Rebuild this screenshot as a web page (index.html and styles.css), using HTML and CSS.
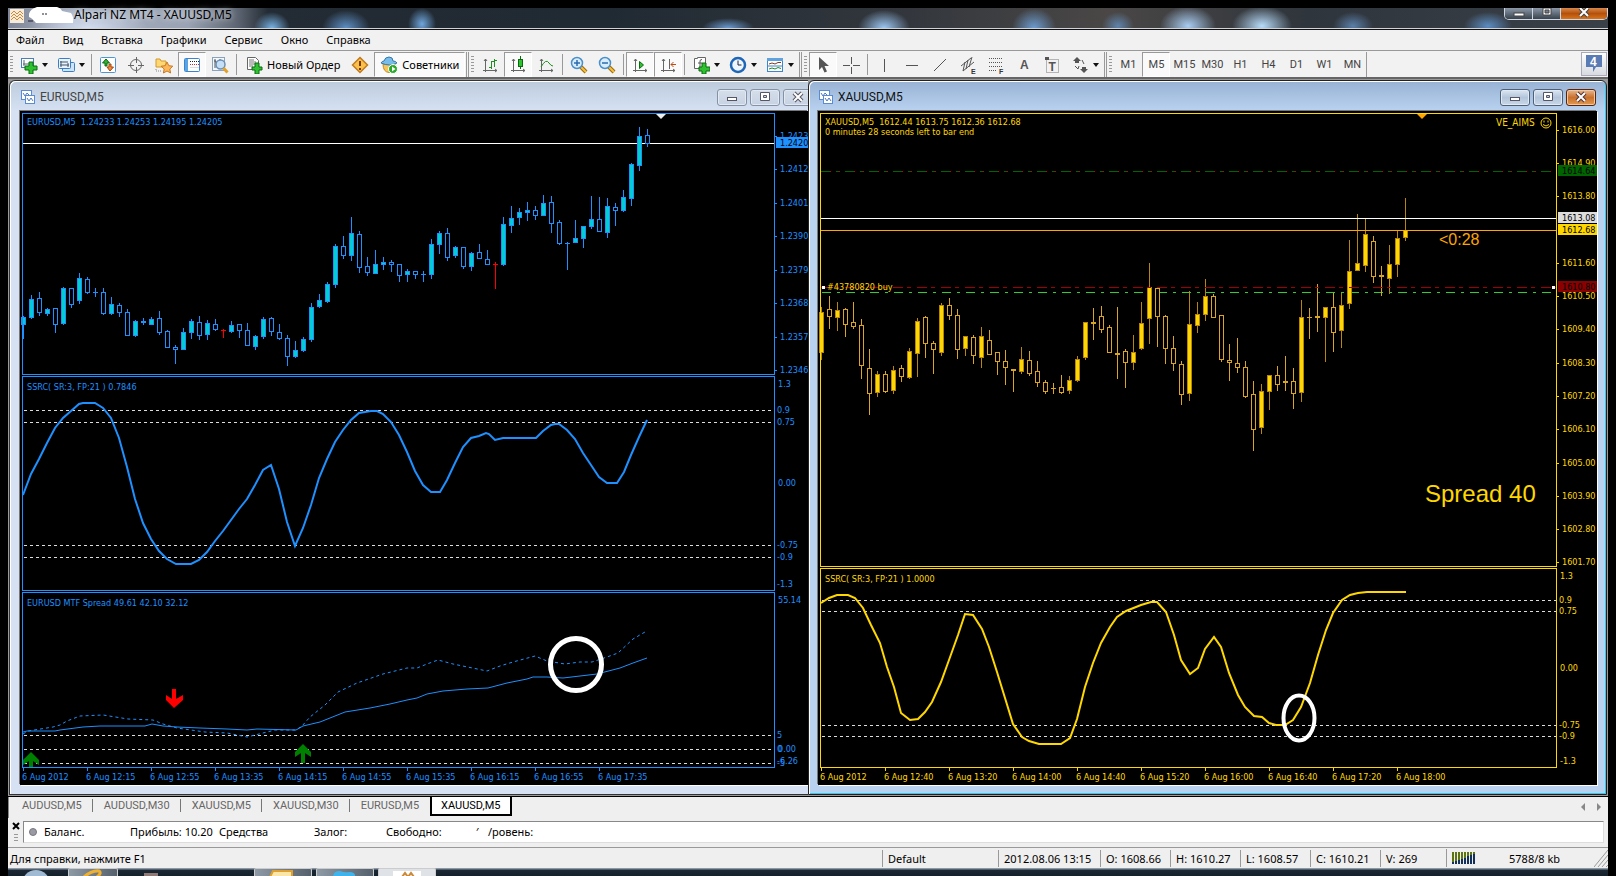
FILE: index.html
```html
<!DOCTYPE html>
<html lang="ru">
<head>
<meta charset="utf-8">
<title>Alpari NZ MT4 - XAUUSD,M5</title>
<link rel="stylesheet" href="styles.css">
</head>
<body>
<div class="app">
  <header class="titlebar">
    <svg class="app-icon" viewBox="0 0 14 14"><rect width="14" height="14" fill="#f6ead8"/><path d="M1 5l3-3 3 3 3-3 3 3M1 8l3-3 3 3 3-3 3 3M1 11l3-3 3 3 3-3 3 3" fill="none" stroke="#c98a3c"/></svg>
    <svg class="blot" viewBox="0 0 46 18"><path d="M1 8Q2 3 9 1h20q4 1 5 4l9 2q3 4 2 10H8Q4 12 1 11z" fill="#fff"/><path d="M0 15h5M14 8h2M17 8h2" stroke="#223" /></svg>
    <h1 class="app-title">Alpari NZ MT4 - XAUUSD,M5</h1>
    <div class="caption">
      <button class="cap" aria-label="Свернуть"><svg viewBox="0 0 14 12"><rect x="2" y="5" width="10" height="3" fill="#fff" stroke="#444"/></svg></button>
      <button class="cap" aria-label="Развернуть"><svg viewBox="0 0 14 12"><path d="M3 0h8v7H3zM5 2v3h4V2z" fill="#fff" fill-rule="evenodd" stroke="#444"/></svg></button>
      <button class="cap cap-close" aria-label="Закрыть"><svg viewBox="0 0 14 12"><path d="M3 0l8 8M11 0L3 8" stroke="#444" stroke-width="4"/><path d="M3 0l8 8M11 0L3 8" stroke="#fff" stroke-width="2"/></svg></button>
    </div>
  </header>
  <nav class="menu">
    <button>Файл</button><button>Вид</button><button>Вставка</button><button>Графики</button><button>Сервис</button><button>Окно</button><button>Справка</button>
  </nav>
  <div class="toolbar">
    <i class="grip"></i>
    <button class="tb split" aria-label="Новый график"><svg viewBox="0 0 18 18"><rect x="1.500" y="2.500" width="12" height="9" fill="#fff" stroke="#4a7fb5"/><path d="M4 4v6M3 8h9" stroke="#567"/><path d="M9 6h4v4h4v4h-4v4H9v-4H5v-4h4z" fill="#2fc12f" stroke="#0a6a12"/></svg><b class="caret"></b></button>
    <button class="tb split" aria-label="Профили"><svg viewBox="0 0 18 18"><rect x="5.500" y="6.500" width="12" height="9" rx="1" fill="#cfe4f8" stroke="#3a7fc4"/><rect x="1.500" y="2.500" width="12" height="10" rx="1" fill="#e8f3fd" stroke="#3a7fc4"/><path d="M4 5v6M3 6h8M3 9h9M11 7v4" stroke="#456"/></svg><b class="caret"></b></button>
    <i class="sep"></i>
    <button class="tb" aria-label="Обзор рынка"><svg viewBox="0 0 18 18"><rect x="1.500" y="1.500" width="15" height="15" rx="1" fill="#fff" stroke="#4f97d2"/><path d="M7 3L3.500 7H6v3h2V7h2.500z" fill="#2db52d" stroke="#0a6a12"/><path d="M11 15l-3-4h2V8h2v3h2.500z" fill="#f08a3a" stroke="#a3460c"/></svg></button>
    <button class="tb" aria-label="Окно данных"><svg viewBox="0 0 18 18"><circle cx="9" cy="9" r="5.500" fill="none" stroke="#666"/><path d="M9.500 1v6M9.500 11v6M1 9.500h6M11 9.500h6" stroke="#666"/></svg></button>
    <button class="tb" aria-label="Навигатор"><svg viewBox="0 0 18 18"><path d="M1 3h4l1 2h5v6H1z" fill="#ffd873" stroke="#d09a2c"/><path d="M1 13v2h5" stroke="#888" fill="none" stroke-dasharray="1 1"/><path d="M12 6l1.800 3.700 4 .5-3 2.800.8 4-3.600-2-3.600 2 .8-4-3-2.800 4-.5z" fill="#fdb75a" stroke="#c77a21"/></svg></button>
    <button class="tb on" aria-label="Терминал"><svg viewBox="0 0 18 18"><rect x="1.500" y="2.500" width="15" height="13" rx="1" fill="#fff" stroke="#3a84cf"/><path d="M2 3h3v12H2z" fill="#5ba4e4"/><path d="M7 5.500h9" stroke="#222" stroke-dasharray="1 1"/><path d="M7 8.500h9" stroke="#d22" stroke-dasharray="1 1"/><path d="M7 11.500h9" stroke="#ddd"/></svg></button>
    <button class="tb" aria-label="Тестер стратегий"><svg viewBox="0 0 18 18"><rect x="1.500" y="1.500" width="12" height="13" fill="#f4f8fc" stroke="#8ba2ba"/><path d="M3 5h2v2M4 3v9M9 3v3" stroke="#555" fill="none"/><circle cx="9.500" cy="8.500" r="4.500" fill="#c5e0f6" stroke="#6a8eb4" stroke-width="1.500"/><path d="M12.500 12l4 4.500" stroke="#e2a12a" stroke-width="3"/></svg></button>
    <i class="sep"></i>
    <button class="tb wide"><svg viewBox="0 0 18 18"><path d="M2.500 1.500h8l3 3v9h-11z" fill="#fff" stroke="#666"/><path d="M4 4h5M4 6h7M4 8h7M4 10h4" stroke="#777"/><path d="M10 7h4v4h3v3h-3v4h-4v-4H7v-3h3z" fill="#2fc12f" stroke="#0a6a12"/></svg><span>Новый Ордер</span></button>
    <button class="tb" aria-label="MetaEditor"><svg viewBox="0 0 18 18"><path d="M9 1.500L16.500 9 9 16.500 1.500 9z" fill="#f9c04e" stroke="#c07a1c" stroke-width="1.500"/><path d="M9 5v5M9 12v2" stroke="#7a3b00" stroke-width="2"/></svg></button>
    <button class="tb wide on"><svg viewBox="0 0 18 18"><path d="M3 8q0 8 6 8.500 6-1 6-8.500z" fill="#f7c55a" stroke="#c08a25"/><path d="M1 7q1-2 3-2 1-4 5-4t4 4q3 0 4 2-7 4-16 0z" fill="#78bdea" stroke="#3577aa"/><circle cx="13" cy="13" r="4.500" fill="#2aa92a" stroke="#fff"/><path d="M12 10.500v5l3.500-2.500z" fill="#fff"/></svg><span>Советники</span></button>
    <i class="edge"></i><i class="grip"></i>
    <button class="tb" aria-label="Бары"><svg viewBox="0 0 18 18"><path d="M4.500 3v13M2 14.500h14M3 5l1.500-2L6 5M14 13l2 1.500-2 1.500" stroke="#666" fill="none"/><path d="M10.500 5v8M8 11.500h2.500M13.500 3v8M11 5.500h2.500M13.500 4.500H16" stroke="#1f8f1f"/></svg></button>
    <button class="tb on" aria-label="Свечи"><svg viewBox="0 0 18 18"><path d="M4.500 3v13M2 14.500h14M3 5l1.500-2L6 5M14 13l2 1.500-2 1.500" stroke="#666" fill="none"/><path d="M11.500 0v13" stroke="#0a6a12"/><rect x="9.500" y="3.500" width="4" height="7" fill="#2fc12f" stroke="#0a6a12"/></svg></button>
    <button class="tb" aria-label="Линия"><svg viewBox="0 0 18 18"><path d="M4.500 3v13M2 14.500h14M3 5l1.500-2L6 5M14 13l2 1.500-2 1.500" stroke="#666" fill="none"/><path d="M4 11q5-9 8-4 2 3 4 3" stroke="#1f8f1f" fill="none"/></svg></button>
    <i class="sep"></i>
    <button class="tb" aria-label="Увеличить"><svg viewBox="0 0 18 18"><path d="M11 11l5 5" stroke="#9a6a10" stroke-width="4"/><path d="M11 11l5 5" stroke="#f5c040" stroke-width="2"/><circle cx="7" cy="7" r="5.500" fill="#d8ecfb" stroke="#4a90c8" stroke-width="1.500"/><path d="M7 4v6M4 7h6" stroke="#2a6cb0" stroke-width="1.500"/></svg></button>
    <button class="tb" aria-label="Уменьшить"><svg viewBox="0 0 18 18"><path d="M11 11l5 5" stroke="#9a6a10" stroke-width="4"/><path d="M11 11l5 5" stroke="#f5c040" stroke-width="2"/><circle cx="7" cy="7" r="5.500" fill="#d8ecfb" stroke="#4a90c8" stroke-width="1.500"/><path d="M4 7h6" stroke="#2a6cb0" stroke-width="1.500"/></svg></button>
    <i class="sep"></i>
    <button class="tb on" aria-label="Автопрокрутка"><svg viewBox="0 0 18 18"><path d="M4.500 3v13M2 14.500h14M3 5l1.500-2L6 5M14 13l2 1.500-2 1.500" stroke="#666" fill="none"/><path d="M8.500 5.500v7l4-3.500z" fill="#2fc12f" stroke="#0a6a12"/></svg></button>
    <button class="tb on" aria-label="Сдвиг графика"><svg viewBox="0 0 18 18"><path d="M4.500 3v13M2 14.500h14M3 5l1.500-2L6 5M14 13l2 1.500-2 1.500M10.500 3v10" stroke="#666" fill="none"/><path d="M12 8.500h5M14.500 6L12 8.500l2.500 2.500" stroke="#c04a10" fill="none"/></svg></button>
    <i class="sep"></i>
    <button class="tb split" aria-label="Индикаторы"><svg viewBox="0 0 18 18"><path d="M2.500 2.500h3v-1h8v11h-11z" fill="#fff" stroke="#666"/><path d="M8 11V5q0-1.500 2-1.500M6 7h4" stroke="#555" fill="none"/><path d="M10 7h4v4h4v4h-4v3h-4v-3H7v-4h3z" fill="#2fc12f" stroke="#0a6a12"/></svg><b class="caret"></b></button>
    <button class="tb split" aria-label="Периоды"><svg viewBox="0 0 18 18"><circle cx="9" cy="9" r="7" fill="#eef7ff" stroke="#1d66b8" stroke-width="2.500"/><path d="M9 4.500V9h3.500" stroke="#223" fill="none"/></svg><b class="caret"></b></button>
    <button class="tb split" aria-label="Шаблоны"><svg viewBox="0 0 18 18"><rect x="1.500" y="2.500" width="15" height="13" fill="#fff" stroke="#3d86cc"/><path d="M1 2h16v3H1z" fill="#5ea2df"/><path d="M3 8l3-1 3 1 3-1.500h3" stroke="#8a3a1a" fill="none"/><path d="M2 10h14" stroke="#3d86cc"/><path d="M3 13l3-1 3 1 3-1.500 3 1" stroke="#1f8f1f" fill="none"/></svg><b class="caret"></b></button>
    <i class="edge"></i><i class="grip"></i>
    <button class="tb on" aria-label="Курсор"><svg viewBox="0 0 18 18"><path d="M5 1v13l3-3 2.500 5.500 2.500-1L10.500 10H15z" fill="#555"/></svg></button>
    <button class="tb" aria-label="Перекрестие"><svg viewBox="0 0 18 18"><path d="M9.500 1v7M9.500 11v7M1 9.500h7M11 9.500h7" stroke="#555"/></svg></button>
    <i class="sep"></i>
    <button class="tb" aria-label="Вертикальная линия"><svg viewBox="0 0 18 18"><path d="M9.500 3v13" stroke="#555"/></svg></button>
    <button class="tb" aria-label="Горизонтальная линия"><svg viewBox="0 0 18 18"><path d="M3 9.500h12" stroke="#555"/></svg></button>
    <button class="tb" aria-label="Трендовая линия"><svg viewBox="0 0 18 18"><path d="M3 15L15 3" stroke="#555"/></svg></button>
    <button class="tb" aria-label="Канал"><svg viewBox="0 0 18 18"><path d="M2 10l10-8M4 15L15 6M4 15L6 6M7 13l2-9M10 11l3-10" stroke="#555"/><text x="12" y="18" class="mark">E</text></svg></button>
    <button class="tb" aria-label="Фибоначчи"><svg viewBox="0 0 18 18"><path d="M2 2.500h14M2 6.500h14M2 10.500h14M2 14.500h8" stroke="#555" stroke-dasharray="1 1"/><text x="12" y="18" class="mark">F</text></svg></button>
    <button class="tb letter" aria-label="Текст">A</button>
    <button class="tb" aria-label="Метка"><svg viewBox="0 0 18 18"><rect x="3.500" y="3.500" width="12" height="13" fill="none" stroke="#777" stroke-dasharray="1 1"/><path d="M2 1h4v3H2z" fill="#555"/><text x="5.500" y="15" class="mark-t">T</text></svg></button>
    <button class="tb split" aria-label="Стрелки"><svg viewBox="0 0 18 18"><path d="M6 1l4 4H8v2H4V5H2zM13 17l-4-4h2v-2h4v2h2z" fill="#555"/><path d="M4 10l3 3 1-3M11 4l2 4" fill="none" stroke="#555"/></svg><b class="caret"></b></button>
    <i class="edge"></i><i class="grip"></i>
    <div class="periods">
      <button>M1</button><button class="on">M5</button><button>M15</button><button>M30</button><button>H1</button><button>H4</button><button>D1</button><button>W1</button><button>MN</button>
    </div>
    <i class="edge thin"></i>
    <button class="alerts" aria-label="Сообщения"><svg viewBox="0 0 18 20"><path d="M1 1h16v12h-6l-3 5v-5H1z" fill="#5b7bb4"/><text x="5" y="12">4</text></svg></button>
  </div>

  <main class="mdi">
    <section class="win">
      <div class="win-title">
        <svg class="win-icon" viewBox="0 0 14 14"><rect x=".5" y=".5" width="10" height="9" fill="#fff" stroke="#5b8bd0"/><path d="M2 3l2 3 2-3 2 2" stroke="#4a7ac8" fill="none"/><rect x="4.500" y="5.500" width="9" height="8" fill="#fff" stroke="#5b8bd0"/><path d="M6 8l2 3 2-3 2 3" stroke="#4a7ac8" fill="none"/></svg>
        <h2>EURUSD,M5</h2>
        <div class="win-btns">
          <button aria-label="Свернуть"><svg viewBox="0 0 14 12"><rect x="2.500" y="6.500" width="9" height="3" fill="#fff" stroke="#556"/></svg></button>
          <button aria-label="Развернуть"><svg viewBox="0 0 14 12"><path d="M2.500 1.500h9v8h-9zM5.500 4.500v2h3v-2z" fill="#fff" fill-rule="evenodd" stroke="#556"/></svg></button>
          <button aria-label="Закрыть"><svg viewBox="0 0 14 12"><path d="M3 2l8 8M11 2l-8 8" stroke="#556" stroke-width="4"/><path d="M3 2l8 8M11 2l-8 8" stroke="#fff" stroke-width="2"/></svg></button>
        </div>
      </div>
      <svg class="chart eur" id="eurusd" viewBox="20 111 788 674" preserveAspectRatio="xMinYMin meet"></svg>
    </section>
    <section class="win active">
      <div class="win-title">
        <svg class="win-icon" viewBox="0 0 14 14"><rect x=".5" y=".5" width="10" height="9" fill="#fff" stroke="#5b8bd0"/><path d="M2 3l2 3 2-3 2 2" stroke="#4a7ac8" fill="none"/><rect x="4.500" y="5.500" width="9" height="8" fill="#fff" stroke="#5b8bd0"/><path d="M6 8l2 3 2-3 2 3" stroke="#4a7ac8" fill="none"/></svg>
        <h2>XAUUSD,M5</h2>
        <div class="win-btns">
          <button aria-label="Свернуть"><svg viewBox="0 0 14 12"><rect x="2.500" y="6.500" width="9" height="3" fill="#fff" stroke="#556"/></svg></button>
          <button aria-label="Развернуть"><svg viewBox="0 0 14 12"><path d="M2.500 1.500h9v8h-9zM5.500 4.500v2h3v-2z" fill="#fff" fill-rule="evenodd" stroke="#556"/></svg></button>
          <button class="x" aria-label="Закрыть"><svg viewBox="0 0 14 12"><path d="M3 2l8 8M11 2l-8 8" stroke="#533" stroke-width="4"/><path d="M3 2l8 8M11 2l-8 8" stroke="#fff" stroke-width="2"/></svg></button>
        </div>
      </div>
      <svg class="chart xau" id="xauusd" viewBox="818 111 779 674" preserveAspectRatio="xMinYMin meet"></svg>
    </section>
  </main>

  <div class="tabs">
    <button>AUDUSD,M5</button><button>AUDUSD,M30</button><button>XAUUSD,M5</button><button>XAUUSD,M30</button><button>EURUSD,M5</button><button class="current">XAUUSD,M5</button>
    <div class="scroll"><button class="left" aria-label="Назад"></button><button class="right" aria-label="Вперёд"></button></div>
  </div>
  <div class="terminal">
    <div class="dock"><button aria-label="Закрыть панель"><svg viewBox="0 0 8 8"><path d="M1 1l6 6M7 1L1 7" stroke="#000" stroke-width="2"/></svg></button><i></i></div>
    <div class="account">
      <span class="dot"></span>
      <span class="c1">Баланс.</span><span class="c2">Прибыль: 10.20</span><span class="c3">Средства</span><span class="c4">Залог:</span><span class="c5">Свободно:</span><span class="c6">′</span><span>/ровень:</span>
    </div>
  </div>
  <footer class="status">
    <span class="help">Для справки, нажмите F1</span>
    <span class="s-def">Default</span><span class="s-date">2012.08.06 13:15</span><span class="s-p">O: 1608.66</span><span class="s-p">H: 1610.27</span><span class="s-p">L: 1608.57</span><span class="s-p">C: 1610.21</span><span class="s-v">V: 269</span>
    <span class="s-net"><svg viewBox="0 0 24 12"><path d="M1 0v12M4 0v12M7 0v12M10 0v12M13 0v12M16 0v12M19 0v12M22 0v12" stroke="#5d7410" stroke-width="2"/><path d="M1 10v2M4 9v3M7 8v4M10 7v5M13 6v6M16 4v8M19 3v9M22 2v10" stroke="#12305c" stroke-width="2"/></svg><b>5788/8 kb</b><svg class="sizer" viewBox="0 0 14 18"><path d="M0 18L14 1M4 18L14 6M8 18l6-7M12 18l2-2" stroke="#999"/></svg></span>
  </footer>
  <div class="taskbar">
    <i class="orb"></i>
    <button aria-label="Internet Explorer"><svg viewBox="0 0 30 8"><path d="M6 8Q14 1 21 2q3 2-2 6" fill="none" stroke="#f0b030" stroke-width="3"/></svg></button>
    <i class="item"></i>
    <button aria-label="Проводник"><svg viewBox="0 0 30 8"><path d="M2 8l3-6h19v6z" fill="#f9e6a8" stroke="#e0a030" stroke-width="2"/></svg></button>
    <button aria-label="Skype"><svg viewBox="0 0 30 8"><path d="M3 8q0-6 7-6 5 2 9 1 7 0 6 5z" fill="#3fb4ec"/></svg></button>
    <button class="lit" aria-label="MetaTrader"><svg viewBox="0 0 30 8"><rect x="1" y="2" width="28" height="6" fill="#fff"/><path d="M10 8l3-4 3 4 3-4 3 4" fill="none" stroke="#c98a3c" stroke-width="2"/></svg></button>
  </div>
</div>
<script src="charts.js"></script>
</body>
</html>
```
FILE: styles.css
```css
* { box-sizing: border-box; }
body { margin: 0; background: #000; font: 12px/16px "Noto Sans", "Open Sans", sans-serif; color: #000; }
button { font: inherit; color: inherit; background: none; border: 0; padding: 0; margin: 0; }
h1, h2 { margin: 0; font-weight: 400; }
.app { min-height: 100vh; padding: 8px 8px 0; display: flex; flex-direction: column; }

.titlebar { height: 21px; display: flex; align-items: center; padding-left: 2px;
  background:
    radial-gradient(ellipse 18px 16px at 264px 20px, #79b4e6, transparent),
    radial-gradient(ellipse 24px 18px at 338px 20px, #5d8fc4, transparent),
    radial-gradient(ellipse 14px 16px at 414px 16px, #6fa6dc, transparent),
    radial-gradient(ellipse 26px 10px at 720px 20px, #6a9ad0, transparent),
    radial-gradient(ellipse 26px 18px at 876px 20px, #9cc8f4, transparent),
    radial-gradient(ellipse 22px 20px at 1026px 20px, #6c9cd0, transparent),
    radial-gradient(ellipse 16px 14px at 1110px 18px, #5f83aa, transparent),
    radial-gradient(ellipse 28px 20px at 1180px 18px, #a9cdf2, transparent),
    radial-gradient(ellipse 30px 20px at 1254px 18px, #b7dcfa, transparent),
    radial-gradient(ellipse 20px 14px at 1345px 18px, #5a7ea8, transparent),
    radial-gradient(ellipse 24px 14px at 1480px 18px, #5b8cc0, transparent),
    radial-gradient(ellipse 60px 20px at 80px 20px, #d2ddf0, transparent),
    linear-gradient(90deg, #7e8596 0, #a4aebf 60px, #9aa3b3 180px, #5b6470 230px, #232b34 260px, #202a33 600px, #33373d 900px, #4a4746 1100px, #2f353c 1300px, #3a4048 100%);
  border-bottom: 1px solid #cfd3d8; }
.app-icon { width: 14px; height: 14px; margin-top: -4px; }
.blot { width: 46px; height: 18px; margin: -6px 0 0 4px; }
.app-title { font-size: 12px; line-height: 16px; margin-top: -6px; text-shadow: 0 0 6px #fff; }
.caption { margin-left: auto; align-self: flex-start; display: flex; height: 12px; border: 1px solid #cfd8e2; border-top: 0; border-radius: 0 0 5px 5px; overflow: hidden; }
.cap { width: 28px; border-right: 1px solid #cfd8e2; background: linear-gradient(#8b98a8, #39424e); display: flex; justify-content: center; }
.cap svg { width: 14px; height: 12px; }
.cap-close { width: 46px; border: 0; background: linear-gradient(#d9894a, #b4500c 50%, #d8731a); }

.menu { height: 22px; background: #f2f1f1; border-top: 1px solid #111; border-bottom: 1px solid #999; display: flex; align-items: center; padding-left: 8px; gap: 18px; font-size: 11px; }
.toolbar { height: 28px; background: #f3f2f2; border-bottom: 2px solid #666; display: flex; align-items: stretch; padding-top: 1px; white-space: nowrap; }
.grip { width: 3px; margin: 4px 2px; flex: none; background: repeating-linear-gradient(#999 0 1px, transparent 1px 3px); }
.sep { width: 1px; margin: 2px; background: #999; flex: none; }
.edge { width: 3px; border: solid #999; border-width: 0 1px; margin-left: 1px; flex: none; }
.edge.thin { width: 1px; border-width: 0 0 0 1px; margin-left: 0; }
.tb { width: 28px; display: flex; align-items: center; justify-content: center; flex: none; border: 1px solid transparent; border-radius: 0; }
.tb svg { width: 18px; height: 18px; flex: none; }
.tb.split { width: 37px; gap: 4px; }
.tb.wide { width: auto; padding: 0 5px; gap: 4px; font-size: 11px; }
.tb.on, .periods .on { border-color: #999 #fff #fff #999; background: #fafafa; }
.caret { border: 3px solid transparent; border-top: 4px solid #111; border-bottom: 0; }
.letter { font: bold 12px "Liberation Sans", sans-serif; color: #555; }
.mark { font: bold 7px "Liberation Sans", sans-serif; fill: #333; }
.mark-t { font: bold 12px "Liberation Sans", sans-serif; fill: #555; }
.periods { display: flex; font: 11px Roboto, sans-serif; color: #444; }
.periods button { width: 28px; border: 1px solid transparent; }
.alerts { margin: 0 1px 1px auto; width: 26px; border: 1px solid #aab; background: linear-gradient(#fff, #d8dbe0); display: flex; justify-content: center; align-items: center; }
.alerts svg { width: 18px; height: 20px; }
.alerts text { font: bold 12px "Liberation Sans", sans-serif; fill: #fff; }

.mdi { flex: 1; min-height: 0; display: grid; grid-template-columns: 1fr 1fr; padding: 1px; background: #9a9a9a; }
.win { min-width: 0; min-height: 0; overflow: hidden; display: flex; flex-direction: column; border: 1px solid #333; border-right: 0; border-radius: 6px 0 0 0; padding: 0 0 9px 10px; background: #d5dff0; box-shadow: inset 1px 1px 0 #fff; background-image: linear-gradient(#bccbdb, #d6e2f4 30px); }
.win.active { border: 1px solid #222; border-radius: 6px 6px 0 0; padding: 0 9px 9px; background: #b7d0ee; background-image: linear-gradient(#98b2d4, #b9d2f0 30px); box-shadow: inset 1px 1px 0 #fff, inset -1px -1px 0 #35c8e8; }
.win-title { height: 30px; flex: none; display: flex; align-items: center; gap: 5px; padding-top: 2px; color: #444; }
.active .win-title { color: #111; }
.win-icon { width: 14px; height: 14px; margin-left: 1px; }
.win-title h2 { font: 12px/16px Roboto, sans-serif; }
.win-btns { margin-left: auto; display: flex; gap: 3px; margin-right: -5px; }
.active .win-btns { margin-right: 1px; }
.win-btns button { width: 30px; height: 17px; border: 1px solid #8592a6; border-radius: 3px; background: linear-gradient(#d5deea, #c7d2e2); display: flex; justify-content: center; align-items: center; box-shadow: inset 0 0 0 1px #e2e9f2; }
.active .win-btns button { border-color: #4e6076; background: linear-gradient(#dbe6f2, #b3c5da 50%, #c9d8e8); }
.win-btns svg { width: 14px; height: 12px; }
.active .win-btns .x { border-color: #5b2410; background: linear-gradient(#e8b890, #c9702c 50%, #e09a50); box-shadow: inset 0 0 0 1px #f0c8a0; }
.chart { flex: 1; min-height: 0; width: 100%; display: block; background: #000; box-shadow: -1px -1px 0 #777, 1px 1px 0 #fff; }
.chart text { font: 9px "DejaVu Sans Condensed", "Noto Sans", sans-serif; white-space: pre; }
.chart .frame, .chart .tick { fill: none; shape-rendering: crispEdges; }
.chart rect, .chart .hline { shape-rendering: crispEdges; }
.eur text { fill: #1e90ff; }
.xau text { fill: #ffd700; }
.chart .on-tag { fill: #000; }
.chart .expert { font-size: 10px; }
.chart .timer { font: 16px "Liberation Sans", sans-serif; fill: #ffa500; }
.chart .spread { font: 24px "Liberation Sans", sans-serif; }

.tabs { height: 22px; background: #f0efef; border-top: 1px solid #000; display: flex; align-items: flex-start; padding-left: 3px; font: 11px/18px Roboto, sans-serif; color: #666; box-shadow: inset 1px 0 0 #888; }
.tabs > button { padding: 0 11px; height: 18px; background: linear-gradient(#777, #777) right 2px / 1px 13px no-repeat; }
.tabs > button:nth-child(5) { background: none; }
.tabs > .current { background: #fff; color: #000; border: solid #000; border-width: 0 2px 2px; height: 19px; padding: 0 9px; }
.scroll { margin-left: auto; display: flex; gap: 12px; padding: 6px 7px 0 0; }
.scroll button { border: 4px solid transparent; width: 4px; height: 8px; }
.scroll .left { border-width: 4px 4px 4px 0; border-right-color: #888; }
.scroll .right { border-width: 4px 0 4px 4px; border-left-color: #888; }

.terminal { height: 30px; background: #f0efef; border-bottom: 1px solid #999; display: flex; padding: 3px 4px 4px 0; }
.dock { width: 15px; display: flex; flex-direction: column; align-items: center; padding-top: 1px; gap: 4px; }
.dock button { width: 8px; height: 8px; display: flex; }
.dock svg { width: 8px; height: 8px; }
.dock i { width: 4px; height: 8px; background: repeating-linear-gradient(#999 0 1px, transparent 1px 3px); }
.account { flex: 1; background: #fff; border: 1px solid #ddd; border-top-color: #888; border-left-color: #888; display: flex; align-items: center; font-size: 11px; white-space: nowrap; }
.dot { width: 8px; height: 8px; border-radius: 50%; background: #9a9aa4; border: 1px solid #77777f; margin: 0 7px 0 5px; }
.c1 { width: 86px; }
.c2 { width: 89px; }
.c3 { width: 95px; }
.c4 { width: 72px; }
.c5 { width: 90px; }
.c6 { width: 12px; }

.status { height: 20px; background: #f0efef; display: flex; align-items: center; font-size: 11px; line-height: 17px; white-space: nowrap; }
.help { flex: 1; padding-left: 2px; }
.status span + span { border-left: 1px solid #999; padding-left: 5px; }
.s-def { width: 116px; }
.s-date { width: 102px; }
.s-p { width: 70px; }
.s-v { width: 66px; }
.s-net { width: 162px; display: flex; align-items: center; }
.s-net svg { width: 24px; height: 12px; }
.s-net b { font-weight: 400; margin-left: 33px; }
.s-net .sizer { width: 14px; height: 18px; margin-left: auto; }

.taskbar { height: 8px; overflow: hidden; display: flex; align-items: flex-start; background: linear-gradient(#8b98a6 0 1px, #1c2833 2px, #14202a); }
.orb { width: 28px; height: 28px; border-radius: 50%; background: #9fbad2; margin: 2px 18px 0 14px; }
.taskbar button { width: 58px; height: 8px; margin-right: 4px; border: 1px solid #ccc; border-bottom: 0; border-radius: 2px 2px 0 0; background: linear-gradient(90deg, #8d99a5, #55616c); display: flex; justify-content: center; overflow: hidden; }
.taskbar button:first-of-type { width: 50px; }
.taskbar .item { width: 14px; height: 8px; margin: 5px 96px 0 22px; background: #8f7a76; }
.taskbar svg { width: 30px; height: 8px; flex: none; }
.taskbar .lit { background: #dfe3e8; }
```
FILE: charts.js
```js
const NS = 'http://www.w3.org/2000/svg';

function add(svg, name, attrs, text) {
  const el = document.createElementNS(NS, name);
  for (const key in attrs) el.setAttribute(key, attrs[key]);
  if (text !== undefined) el.textContent = text;
  svg.appendChild(el);
  return el;
}

// Each candle: kind (u up, d down, x doji, r marked), high, body top, body bottom, low.
function candles(svg, x0, step, data, c) {
  data.trim().split(/\s+/).forEach((item, i) => {
    const kind = item[0];
    const [hi, top, bot, lo] = item.slice(1).split(',').map(Number);
    const x = x0 + i * step;
    const line = kind === 'r' ? '#f00' : kind === 'u' ? c.upLine : c.line;
    const flat = kind === 'x' || kind === 'r';
    add(svg, 'rect', { x: x, y: hi, width: 1, height: lo - hi, fill: line });
    add(svg, 'rect', { x: x - 2, y: top, width: 5, height: Math.max(flat ? 1 : 3, bot - top), fill: line });
    if (!flat) {
      add(svg, 'rect', { x: x - 1, y: top + 1, width: 3, height: Math.max(1, bot - top - 2), fill: kind === 'u' ? c.up : '#000' });
    }
  });
}

function panes(svg, left, right, list, color) {
  list.forEach(([top, bottom]) => add(svg, 'path', { class: 'frame', d: `M${left} ${top}H${right}V${bottom}H${left}z`, stroke: color }));
}

function levels(svg, x1, x2, list) {
  list.forEach(y => add(svg, 'path', { class: 'hline', d: `M${x1} ${y}H${x2}`, stroke: '#ddd', 'stroke-dasharray': '3 3' }));
}

function line(svg, y, x1, x2, color, dash) {
  add(svg, 'path', { class: 'hline', d: `M${x1} ${y}H${x2}`, stroke: color, 'stroke-dasharray': dash || 'none' });
}

function curve(svg, points, color, width, dash) {
  add(svg, 'polyline', { points, fill: 'none', stroke: color, 'stroke-width': width, 'stroke-dasharray': dash || 'none' });
}

function label(svg, x, y, text, cls) {
  add(svg, 'text', { x, y, class: cls || '' }, text);
}

function scale(svg, x, list, color) {
  list.forEach(([y, text]) => {
    add(svg, 'path', { class: 'tick', d: `M${x} ${y}.5h3`, stroke: color });
    label(svg, x + 6, y + 3, text);
  });
}

function times(svg, x, list, color) {
  list.forEach((t, i) => {
    add(svg, 'path', { class: 'tick', d: `M${x + i * 64 + 1.5} 768v3`, stroke: color });
    label(svg, x + i * 64, 780, '6 Aug ' + t);
  });
}

function tag(svg, x, y, width, fill, text) {
  add(svg, 'rect', { x, y, width, height: 11, fill });
  label(svg, x + 4, y + 9, text, 'on-tag');
}

const eur = document.getElementById('eurusd');
const blue = '#1e90ff';
line(eur, 143.5, 23, 774, '#fff');
candles(eur, 23, 8, `
u316,317,325,339 u295,299,318,319 d292,298,313,316 u308,309,314,316 d308,308,325,333 u287,288,324,325
d288,288,305,308 u273,278,301,304 d277,279,293,294 x288,292,293,297 d288,292,314,315 u297,304,314,315
d303,305,313,317 d309,312,336,336 u320,321,336,337 x318,321,323,325 u317,319,325,325 d311,318,333,335
d330,331,348,348 d345,347,350,364 u328,332,350,350 u319,321,333,339 d316,322,336,340 u320,323,335,340
d319,324,330,331 r329,330,331,338 u321,325,332,333 d324,324,331,338 d323,330,346,346 u335,336,347,350
u317,319,337,339 d317,318,332,336 d324,332,339,340 d335,338,357,366 u341,350,357,358 u337,339,351,352
u303,307,340,342 u294,300,307,308 u282,284,302,303 u244,246,285,288 d236,246,256,259 u217,233,256,261
d231,234,268,273 d257,266,273,276 u250,264,274,274 u257,262,265,270 d260,262,265,272 d264,264,276,282
u269,271,275,282 d271,271,275,279 x271,274,275,282 u239,244,275,279 u231,233,245,254 d228,233,258,261
u246,247,256,258 d247,247,267,269 u252,253,267,271 d244,252,259,259 d250,259,265,265 r262,264,265,289
u217,224,265,266 u206,218,226,233 u208,212,218,225 u202,210,213,221 d206,210,216,220 u195,203,216,216
d196,202,224,233 d220,222,244,245 x242,243,244,270 u220,238,243,243 u226,226,239,248 u196,219,227,229
d197,219,232,232 u198,206,233,238 d203,207,211,226 u190,197,211,212 u163,164,199,206 u127,136,166,171
d129,135,144,147`, { up: '#00ced1', line: blue, upLine: blue });
levels(eur, 24, 774, [410.5, 422.5, 545.5, 557.5, 735.5, 749.5, 763.5]);
curve(eur, '23,495 31,474 39,459 47,443 55,428 63,418 71,411 79,404 83,403 95,403 103,408 111,418 119,438 127,467 135,499 143,523 151,539 159,551 167,559 176,564 191,564 199,560 207,552 215,541 223,531 231,520 239,509 247,499 255,485 263,470 271,465 279,489 287,522 295,546 303,528 311,505 319,478 327,459 335,442 343,430 351,420 359,413 371,411 377,411 383,414 391,422 399,435 407,452 415,471 423,485 431,492 440,492 447,480 455,463 463,447 471,438 479,436 486,433 489,434 495,440 503,438 536,438 543,431 551,425 555,424 559,424 567,430 575,439 583,453 591,465 599,477 607,483 617,483 624,472 631,455 639,437 647,420', blue, 2);
curve(eur, '23,732 27,731 55,731 60,730 83,727 100,726 145,726 152,724 163,726 177,727 200,728 227,729 247,730 257,729 296,730 303,726 320,722 345,712 370,708 390,704 407,700 417,698 427,694 443,691 467,689 488,688 507,683 527,679 533,677 547,677 563,678 580,676 597,674 620,668 633,663 647,658', blue, 1);
curve(eur, '23,734 28,731 53,727 60,725 67,721 80,716 103,715 128,719 153,720 163,724 177,728 205,732 227,733 247,737 267,732 275,730 296,730 302,726 310,717 325,705 338,692 357,683 383,674 407,668 417,668 427,664 438,660 453,664 487,671 500,666 513,662 535,656 547,661 565,664 580,662 592,662 607,657 618,653 633,639 645,632', blue, 1, '3 3');
add(eur, 'path', { d: 'M172 689h4v10l7-4v5l-9 8-8-8v-5l6 4z', fill: '#f00' });
add(eur, 'path', { d: 'M301 763h4v-10l6 4v-5l-8-8-8 8v5l6-4z', fill: '#008000' });
add(eur, 'path', { d: 'M29 767h4v-6l6 4v-5l-8-8-8 8v5l6-4z', fill: '#008000' });
panes(eur, 22.5, 774.5, [[113.5, 374.5], [376.5, 590.5], [592.5, 767.5]], blue);
add(eur, 'path', { d: 'M656 114h10l-5 5z', fill: '#eee' });
add(eur, 'ellipse', { cx: 576, cy: 664.5, rx: 25.5, ry: 26, fill: 'none', stroke: '#fff', 'stroke-width': 5 });
label(eur, 27, 125, 'EURUSD,M5  1.24233 1.24253 1.24195 1.24205');
label(eur, 27, 390, 'SSRC( SR:3, FP:21 ) 0.7846');
label(eur, 27, 606, 'EURUSD MTF Spread 49.61 42.10 32.12');
scale(eur, 774, [[136, '1.2423'], [169, '1.2412'], [203, '1.2401'], [236, '1.2390'], [270, '1.2379'], [303, '1.2368'], [337, '1.2357'], [370, '1.2346']], blue);
tag(eur, 776, 137, 32, blue, '1.2420');
[[778, 387, '1.3'], [777, 413, '0.9'], [777, 425, '0.75'], [778, 486, '0.00'], [777, 548, '-0.75'], [777, 560, '-0.9'], [777, 587, '-1.3'], [778, 603, '55.14'], [777, 738, '5'], [777, 752, '0'], [778, 752, '0.00'], [777, 766, '-5'], [777, 764, '-6.26']].forEach(l => label(eur, ...l));
times(eur, 22, ['2012', '12:15', '12:55', '13:35', '14:15', '14:55', '15:35', '16:15', '16:55', '17:35'], blue);

const xau = document.getElementById('xauusd');
const gold = '#ffd700';
line(xau, 171.5, 821, 1556, '#d00000', '10 5 4 5');
line(xau, 171.5, 821, 1556, '#006400', '9 6 3 6');
line(xau, 292.5, 822, 1556, '#32cd32', '9 6 3 6');
candles(xau, 821, 8, `
u307,312,353,360 d296,309,317,329 u302,310,318,331 d308,309,325,337 d302,322,327,329 d319,325,366,379
d349,368,394,415 u371,374,393,397 d371,374,392,393 u366,370,391,394 d365,368,377,382 u348,351,378,379
u318,321,354,377 d316,317,344,358 d341,343,350,374 u303,305,353,356 d298,305,316,320 d309,315,350,359
u336,336,349,356 d335,337,356,364 u327,336,358,368 d330,340,355,355 d352,352,362,375 d350,361,368,385
x369,369,371,392 u347,359,372,374 d351,360,374,376 d361,371,383,387 d380,382,392,394 x383,388,389,394
d375,387,393,394 u376,380,391,394 u356,359,381,382 u322,322,358,360 x308,322,324,340 d306,316,330,333
d325,327,353,353 x307,353,355,379 d349,351,363,388 u335,352,363,370 u302,323,349,350 u263,287,319,344
d287,288,317,347 d315,316,349,364 d336,348,364,371 d361,364,395,405 u291,324,394,401 u302,314,326,333
u279,296,315,321 d294,296,318,318 d315,315,360,362 d344,360,363,381 d338,363,368,373 d361,367,397,398
d381,394,430,451 u384,391,428,434 u375,375,392,410 d366,375,385,391 x356,381,383,391 d368,381,394,409
u300,317,393,402 x308,317,318,339 x284,316,318,332 u307,307,318,362 d293,307,333,352 u293,305,331,348
u240,271,304,309 u214,263,271,271 u218,234,266,272 d236,241,277,283 x266,275,277,296 u245,264,279,294
u230,238,265,277 u198,230,238,241`, { up: gold, line: '#daa520', upLine: '#b8860b' });
line(xau, 218.5, 821, 1556, '#fff');
line(xau, 230.5, 821, 1556, '#ffa500');
line(xau, 287.5, 821, 1556, '#a00000', '10 4 4 6');
levels(xau, 822, 1556, [600.5, 611.5, 725.5, 736.5]);
curve(xau, '821,603 829,598 837,595 848,595 855,598 863,608 871,625 880,643 887,667 894,687 901,713 910,720 918,719 925,712 932,702 941,682 949,660 958,635 965,614 973,615 982,629 989,647 997,672 1005,698 1013,724 1022,737 1029,741 1039,744 1061,744 1070,738 1077,719 1085,687 1093,663 1101,643 1110,627 1117,617 1126,611 1141,605 1151,602 1157,602 1166,612 1174,635 1181,660 1190,674 1198,668 1205,649 1214,637 1221,647 1229,673 1238,695 1245,707 1254,716 1262,717 1269,723 1276,725 1285,725 1293,720 1301,707 1310,683 1318,655 1326,630 1333,613 1342,600 1350,595 1358,593 1367,592 1406,592', gold, 2);
panes(xau, 820.5, 1556.5, [[113.5, 566.5], [568.5, 767.5]], gold);
add(xau, 'rect', { x: 822, y: 286, width: 3, height: 3, fill: '#fff' });
add(xau, 'rect', { x: 1552, y: 286, width: 3, height: 3, fill: '#fff' });
add(xau, 'path', { d: 'M1417 114h10l-5 5z', fill: '#ffa500' });
add(xau, 'ellipse', { cx: 1299, cy: 718, rx: 15.5, ry: 22.5, fill: 'none', stroke: '#fff', 'stroke-width': 4 });
label(xau, 825, 125, 'XAUUSD,M5  1612.44 1613.75 1612.36 1612.68');
label(xau, 825, 135, '0 minutes 28 seconds left to bar end');
label(xau, 827, 290, '#43780820 buy');
label(xau, 1496, 126, 'VE_AIMS', 'expert');
add(xau, 'circle', { cx: 1546, cy: 123, r: 5, fill: 'none', stroke: gold });
add(xau, 'path', { d: 'M1543 124.500q3 3 6 0M1544 120.500v2M1548 120.500v2', fill: 'none', stroke: gold });
label(xau, 1439, 245, '<0:28', 'timer');
label(xau, 1425, 502, 'Spread 40', 'spread');
label(xau, 825, 582, 'SSRC( SR:3, FP:21 ) 1.0000');
scale(xau, 1556, [[130, '1616.00'], [163, '1614.90'], [196, '1613.80'], [263, '1611.60'], [296, '1610.50'], [329, '1609.40'], [363, '1608.30'], [396, '1607.20'], [429, '1606.10'], [463, '1605.00'], [496, '1603.90'], [529, '1602.80'], [562, '1601.70']], gold);
tag(xau, 1558, 165, 39, '#006400', '1614.64');
tag(xau, 1558, 212, 39, '#ddd', '1613.08');
tag(xau, 1558, 224, 39, gold, '1612.68');
tag(xau, 1558, 281, 39, '#8b0000', '1610.80');
[[1560, 579, '1.3'], [1559, 603, '0.9'], [1559, 614, '0.75'], [1560, 671, '0.00'], [1559, 728, '-0.75'], [1559, 739, '-0.9'], [1560, 764, '-1.3']].forEach(l => label(xau, ...l));
times(xau, 820, ['2012', '12:40', '13:20', '14:00', '14:40', '15:20', '16:00', '16:40', '17:20', '18:00'], gold);
```
